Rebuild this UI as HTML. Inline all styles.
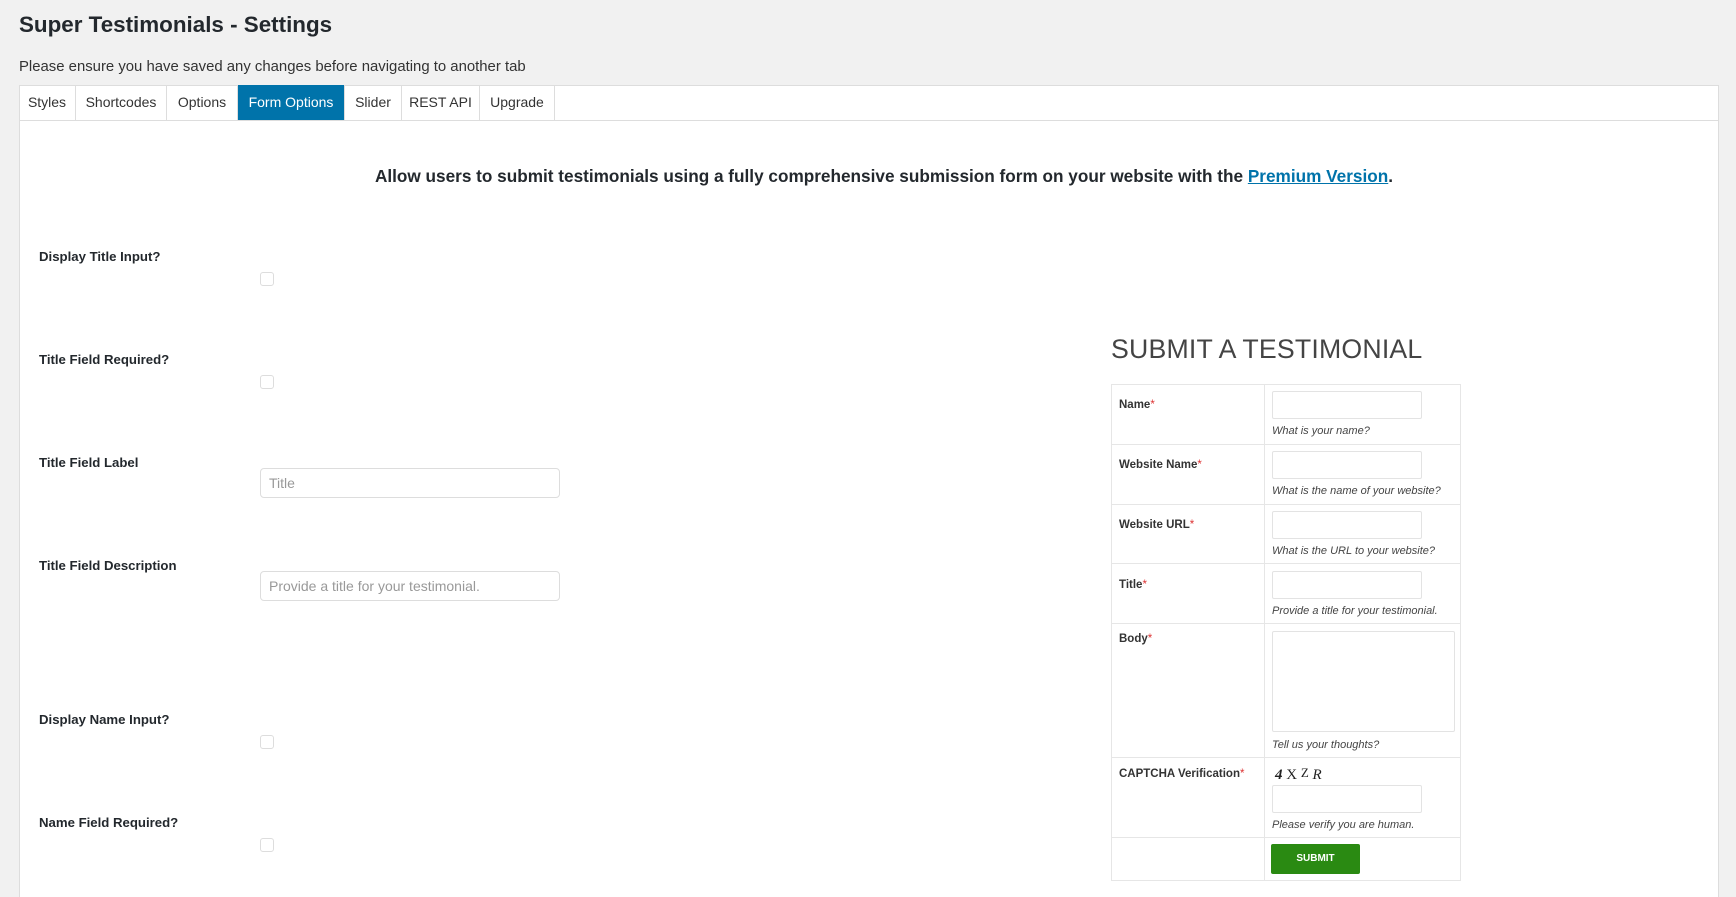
<!DOCTYPE html>
<html style="height:897px;overflow:hidden"><head><meta charset="utf-8"><style>
*{box-sizing:border-box;margin:0;padding:0}
body{width:1736px;height:897px;background:#f1f1f1;font-family:"Liberation Sans",sans-serif;color:#23282d;position:relative;overflow:hidden}
.a{position:absolute}
h1{position:absolute;left:19px;top:12px;font-size:22.4px;font-weight:700;color:#23282d}
.sub{left:19px;top:59px;font-size:14.9px;color:#333}
.panel{left:19px;top:85px;width:1700px;height:812px;background:#fff;border:1px solid #ddd;border-bottom:none}
.tabs{left:19px;top:85px;height:36px;width:1700px;border-bottom:1px solid #ddd}
.tab{position:absolute;top:0;height:35px;line-height:34px;text-align:center;font-size:14px;color:#333;border-right:1px solid #ddd}
.tab.on{background:#0073aa;color:#fff}
.lead{left:19px;width:1700px;top:166px;text-align:center;font-size:17.2px;font-weight:700;color:#23282d;padding-left:30px}
.lead a{color:#0073aa;text-decoration:underline}
.lbl{left:39px;font-size:13.2px;font-weight:700;color:#23282d}
.cb{left:260px;width:14px;height:14px;border:1px solid #ddd;border-radius:3px}
.inp{left:260px;width:300px;height:30px;border:1px solid #ddd;border-radius:4px;font-size:14px;color:#999;padding:6px 8px}
.st{left:1111px;top:334px;font-size:26.7px;font-weight:400;color:#444;letter-spacing:0.2px}
.tbl{left:1111px;top:384px;width:350px;height:497px;border:1px solid #e6e6e6}
.hl{position:absolute;left:1111px;width:350px;height:1px;background:#e6e6e6}
.fl{left:1119px;font-size:11.5px;font-weight:700;color:#333}
.fl i{color:#d33;font-style:normal;font-weight:400}
.fi{left:1272px;width:150px;height:28px;border:1px solid #e3e3e3;border-radius:2px}
.fd{left:1272px;font-size:11px;font-style:italic;color:#444}
</style></head><body>
<h1>Super Testimonials - Settings</h1>
<div class="a sub">Please ensure you have saved any changes before navigating to another tab</div>
<div class="a panel"></div>
<div class="a tabs">
<div class="tab" style="left:0;width:57px">Styles</div>
<div class="tab" style="left:57px;width:91px">Shortcodes</div>
<div class="tab" style="left:148px;width:71px">Options</div>
<div class="tab on" style="left:219px;width:107px">Form Options</div>
<div class="tab" style="left:326px;width:57px">Slider</div>
<div class="tab" style="left:383px;width:78px">REST API</div>
<div class="tab" style="left:461px;width:75px">Upgrade</div>
</div>
<div class="a lead">Allow users to submit testimonials using a fully comprehensive submission form on your website with the <a>Premium Version</a>.</div>
<div class="a lbl" style="top:249px">Display Title Input?</div><div class="a cb" style="top:272px"></div>
<div class="a lbl" style="top:352px">Title Field Required?</div><div class="a cb" style="top:375px"></div>
<div class="a lbl" style="top:455px">Title Field Label</div><div class="a inp" style="top:468px">Title</div>
<div class="a lbl" style="top:558px">Title Field Description</div><div class="a inp" style="top:571px">Provide a title for your testimonial.</div>
<div class="a lbl" style="top:712px">Display Name Input?</div><div class="a cb" style="top:735px"></div>
<div class="a lbl" style="top:815px">Name Field Required?</div><div class="a cb" style="top:838px"></div>

<div class="a st">SUBMIT A TESTIMONIAL</div>
<div class="a tbl"></div>
<div class="a" style="left:1264px;top:384px;width:1px;height:497px;background:#e6e6e6"></div>
<div class="hl" style="top:444px"></div><div class="hl" style="top:504px"></div><div class="hl" style="top:563px"></div><div class="hl" style="top:623px"></div><div class="hl" style="top:757px"></div><div class="hl" style="top:837px"></div>
<div class="a fl" style="top:399px">Name<i>*</i></div><div class="a fi" style="top:391px"></div><div class="a fd" style="top:425px">What is your name?</div>
<div class="a fl" style="top:459px">Website Name<i>*</i></div><div class="a fi" style="top:451px"></div><div class="a fd" style="top:485px">What is the name of your website?</div>
<div class="a fl" style="top:519px">Website URL<i>*</i></div><div class="a fi" style="top:511px"></div><div class="a fd" style="top:545px">What is the URL to your website?</div>
<div class="a fl" style="top:579px">Title<i>*</i></div><div class="a fi" style="top:571px"></div><div class="a fd" style="top:605px">Provide a title for your testimonial.</div>
<div class="a fl" style="top:633px">Body<i>*</i></div><div class="a fi" style="top:631px;width:183px;height:101px"></div><div class="a fd" style="top:739px">Tell us your thoughts?</div>
<div class="a fl" style="top:768px">CAPTCHA Verification<i>*</i></div>
<div class="a" style="left:1275px;top:765px;font-family:'Liberation Serif',serif;font-size:15px;color:#222"><b><i>4</i></b> X <span style="font-size:13px;vertical-align:2px">Z</span> <i>R</i></div>
<div class="a fi" style="top:785px"></div><div class="a fd" style="top:819px">Please verify you are human.</div>
<div class="a" style="left:1271px;top:844px;width:89px;height:30px;background:#2a8a12;border-radius:2px;color:#fff;font-size:10px;font-weight:700;text-align:center;line-height:30px">SUBMIT</div>
</body></html>
